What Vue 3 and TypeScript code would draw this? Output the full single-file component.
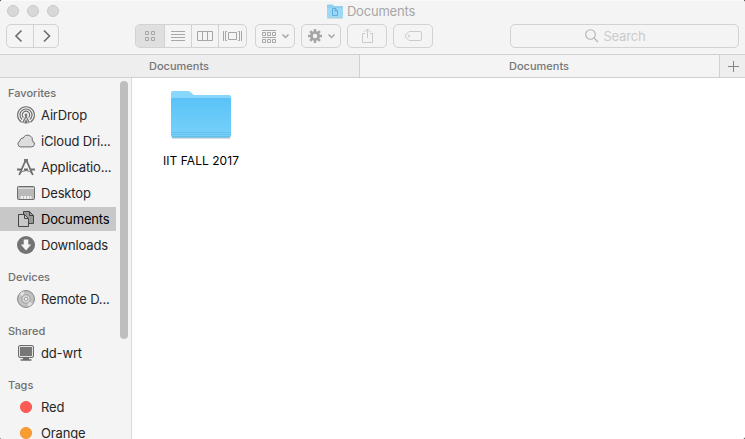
<script setup lang="ts">
interface Item { label: string; icon: string }
interface Section { title: string; items: Item[] }

const selected = 'Documents'
const sections: Section[] = [
  {
    title: 'Favorites',
    items: [
      { label: 'AirDrop', icon: 'airdrop' },
      { label: 'iCloud Dri...', icon: 'cloud' },
      { label: 'Applicatio...', icon: 'apps' },
      { label: 'Desktop', icon: 'desktop' },
      { label: 'Documents', icon: 'documents' },
      { label: 'Downloads', icon: 'downloads' },
    ],
  },
  { title: 'Devices', items: [{ label: 'Remote D...', icon: 'disc' }] },
  { title: 'Shared', items: [{ label: 'dd-wrt', icon: 'monitor' }] },
  { title: 'Tags', items: [{ label: 'Red', icon: 'red' }, { label: 'Orange', icon: 'orange' }] },
]
const teeth: number[] = [0, 45, 90, 135, 180, 225, 270, 315]
</script>

<template>
  <div class="window">
    <header class="toolbar">
      <div class="titlebar">
        <div class="lights"><i></i><i></i><i></i></div>
        <div class="title">
          <svg width="16" height="15" viewBox="0 0 16 15">
            <path d="M0 1.5Q0 .5 1 .5H5.5L7 2H15Q16 2 16 3V13.5H0Z" fill="#8fd0ee" />
            <path d="M0 4H16V13Q16 14 15 14H1Q0 14 0 13Z" fill="#9bd9f6" />
            <path d="M.5 14H15.5" stroke="#a9c6d3" />
            <path d="M5.5 4.5H8.5L10.5 6.7V11.5H5.5ZM8.3 4.5V7H10.5" fill="none" stroke="#5cade0" />
          </svg>
          <span>Documents</span>
        </div>
      </div>
      <div class="controls">
        <div class="group nav">
          <button aria-label="Back"><svg width="26" height="22" viewBox="0 0 26 22"><path d="M14.5 5.5L9 11L14.5 16.5" fill="none" stroke="#6c6c6c" stroke-width="1.6" /></svg></button>
          <button aria-label="Forward"><svg width="26" height="22" viewBox="0 0 26 22"><path d="M10 5.5L15.5 11L10 16.5" fill="none" stroke="#6c6c6c" stroke-width="1.6" /></svg></button>
        </div>
        <div class="group views">
          <button class="on" aria-label="Icons"><svg width="28" height="22" viewBox="0 0 28 22" fill="none" stroke="#a6a6a6"><path d="M9.5 6.5h3v3h-3zM15.5 6.5h3v3h-3zM9.5 12.5h3v3h-3zM15.5 12.5h3v3h-3z" /></svg></button>
          <button aria-label="List"><svg width="26" height="22" viewBox="0 0 26 22" stroke="#a6a6a6"><path d="M6 6.5h14M6 9.5h14M6 12.5h14M6 15.5h14" /></svg></button>
          <button aria-label="Columns"><svg width="26" height="22" viewBox="0 0 26 22" fill="none" stroke="#a6a6a6"><path d="M5.5 6.5h15v9h-15zM10.5 6.5v9M15.5 6.5v9" /></svg></button>
          <button aria-label="Cover Flow"><svg width="27" height="22" viewBox="0 0 27 22" fill="none" stroke="#a6a6a6"><path d="M9.5 7.5h8v7h-8zM4.5 6v10M22.5 6v10M8 6.5h-1.5v9H8M19 6.5h1.5v9H19" /></svg></button>
        </div>
        <div class="group single arrange">
          <button aria-label="Arrange"><svg width="38" height="22" viewBox="0 0 38 22" fill="none" stroke="#a6a6a6"><path d="M6 5.5h14M6 12.5h14M6.5 7.5h3v3h-3zM11.5 7.5h3v3h-3zM16.5 7.5h3v3h-3zM6.5 14.5h3v3h-3zM11.5 14.5h3v3h-3zM16.5 14.5h3v3h-3z" /><path d="M26.5 9.5l3 3l3-3" stroke-width="1.5" /></svg></button>
        </div>
        <div class="group single">
          <button aria-label="Action">
            <svg width="38" height="22" viewBox="0 0 38 22" fill="none" stroke="#a6a6a6">
              <g transform="translate(13 11)"><circle r="3.6" stroke-width="2.8" /><path v-for="a in teeth" :key="a" d="M0-4V-7" stroke-width="2.4" :transform="`rotate(${a})`" /></g>
              <path d="M26.5 9.5l3 3l3-3" stroke-width="1.5" />
            </svg>
          </button>
        </div>
        <div class="group single">
          <button aria-label="Share"><svg width="38" height="22" viewBox="0 0 38 22" fill="none" stroke="#cbcbcb"><path d="M17 8.5h-2.5v9h10v-9H22M19.5 13V4M16.5 7l3-3l3 3" /></svg></button>
        </div>
        <div class="group single">
          <button aria-label="Tags"><svg width="38" height="22" viewBox="0 0 38 22" fill="none" stroke="#cbcbcb"><path d="M15 6.5H26Q27.5 6.5 27.5 8V14Q27.5 15.5 26 15.5H15L11.5 12V10Z" /><circle cx="15" cy="11" r=".8" /></svg></button>
        </div>
        <div class="search">
          <svg width="14" height="14" viewBox="0 0 14 14" fill="none" stroke="#b4b4b4" stroke-width="1.1"><circle cx="5.5" cy="5.5" r="4.8" /><path d="M9 9l4 4" /></svg>
          <span>Search</span>
        </div>
      </div>
    </header>
    <nav class="tabs">
      <div class="tab back">Documents</div>
      <div class="tab">Documents</div>
      <div class="add"><svg width="11" height="11" viewBox="0 0 11 11"><path d="M5.5 0V11M0 5.5H11" stroke="#858585" /></svg></div>
    </nav>
    <main class="body">
      <aside class="sidebar">
        <div class="lists">
          <section v-for="s in sections" :key="s.title">
            <h2>{{ s.title }}</h2>
            <div class="rows">
              <div v-for="it in s.items" :key="it.label" class="row" :class="{ selected: it.label === selected }">
                <svg width="18" height="18" viewBox="0 0 18 18" fill="none" stroke="#6d6d6d">
                  <g v-if="it.icon === 'airdrop'" stroke-width="1.15">
                    <path d="M4.6 16.3A8.4 8.4 0 1 1 13.4 16.3M5.2 13.6A6 6 0 1 1 12.8 13.6M6.5 11.6A3.7 3.7 0 1 1 11.5 11.6" />
                    <path d="M9 7.5A1.5 1.5 0 0 1 9.7 10.3L13 16.5Q9 18.6 5 16.5L8.3 10.3A1.5 1.5 0 0 1 9 7.5Z" fill="#777" stroke="none" />
                    <path d="M6.8 17L9 12.2L11.2 17" stroke="#f3f3f3" stroke-width=".7" />
                  </g>
                  <path v-else-if="it.icon === 'cloud'" d="M3.6 14.9H14.5A3 3 0 0 0 15.2 9A4.7 4.7 0 0 0 6.3 6.1A2.9 2.9 0 0 0 2.9 9.1A3 3 0 0 0 3.6 14.9Z" fill="#dedede" />
                  <g v-else-if="it.icon === 'apps'">
                    <path d="M2.2 17L8.3 3M15.8 17L9.7 3" stroke-width="1.8" />
                    <path d="M0 11.5H4M7 11.5H11M14 11.5H18" stroke-width="2.2" />
                    <path d="M2 16Q9 9 16 16" stroke-width="1" />
                    <path d="M7 1H11V4.5H7Z" fill="#777" stroke="none" />
                  </g>
                  <g v-else-if="it.icon === 'desktop'">
                    <rect x=".5" y="2.5" width="17" height="13" rx="1" fill="#b9b9b9" />
                    <path d="M1 4.5H17" stroke="#dedede" />
                    <path d="M4 15V12.5H14V15" fill="#eee" stroke="#eee" />
                    <path d="M6.5 12V15M9.5 12V15M12.5 12V15" stroke="#b0b0b0" stroke-width=".7" />
                  </g>
                  <g v-else-if="it.icon === 'documents'" stroke="#454545">
                    <path d="M6.5 1.5H12.5L16.5 5.5V13.5H6.5Z" fill="#999" />
                    <path d="M12.5 1.5V5.5H16.5" />
                    <path d="M1.5 4.5H7.5L11.5 8.5V16.5H1.5Z" fill="#c8c8c8" />
                    <path d="M7.5 4.5V8.5H11.5" />
                  </g>
                  <g v-else-if="it.icon === 'downloads'" stroke="none">
                    <circle cx="9" cy="9" r="9" fill="#737373" />
                    <path d="M6.7 3.5H11.3V8.5H14.2L9 14.4L3.8 8.5H6.7Z" fill="#f5f5f5" />
                  </g>
                  <g v-else-if="it.icon === 'disc'">
                    <circle cx="9" cy="9" r="8.4" fill="#c2c2c2" stroke="#818181" />
                    <path d="M9 9L2.5 4.2Q4 2 6.5 1.3ZM9 9L15.5 13.8Q14 16 11.5 16.7Z" fill="#dedede" stroke="none" />
                    <circle cx="9" cy="9" r="4.2" fill="#ddd" stroke="#8b8b8b" stroke-width=".8" />
                    <circle cx="9" cy="9" r="1.8" fill="#eee" stroke="#8b8b8b" stroke-width=".8" />
                  </g>
                  <g v-else-if="it.icon === 'monitor'">
                    <rect x="1.5" y="1.5" width="15" height="12" rx="1.5" fill="#e0e0e0" />
                    <rect x="3" y="3" width="12" height="9" fill="#777" stroke="none" />
                    <path d="M6 14.5H12M3.5 16H14.5" stroke-width="1.3" />
                  </g>
                  <circle v-else-if="it.icon === 'red'" cx="9" cy="9" r="5.6" fill="#ff5b55" stroke="#f64a46" stroke-width=".8" />
                  <circle v-else cx="9" cy="9" r="5.6" fill="#f99d33" stroke="#ee8d22" stroke-width=".8" />
                </svg>
                <span>{{ it.label }}</span>
              </div>
            </div>
          </section>
        </div>
        <div class="scroll"></div>
      </aside>
      <div class="content">
        <div class="file">
          <svg width="64" height="52" viewBox="0 0 64 52">
            <defs><linearGradient id="folder" x1="0" y1="0" x2="0" y2="1"><stop offset="0" stop-color="#5ac3f8" /><stop offset="1" stop-color="#78d1fa" /></linearGradient></defs>
            <path d="M3 49H61" stroke="#cbd5da" stroke-width="1.5" />
            <path d="M2 4Q2 2 4 2H19Q20.5 2 21.5 3L23.5 5Q24.5 6 26 6H60Q62 6 62 8V20H2Z" fill="#88d6fb" />
            <path d="M2 11Q2 9.5 3.5 9.5H60.5Q62 9.5 62 11V46.5Q62 48.5 60 48.5H4Q2 48.5 2 46.5Z" fill="url(#folder)" />
            <path d="M2 10.5Q2 9.5 3.5 9.5H60.5Q62 9.5 62 10.5" fill="none" stroke="#54b8eb" stroke-width=".7" />
            <path d="M2 43.5H62M2 45.5H62" stroke="#5fbde9" stroke-width=".8" />
            <path d="M3 48H61" stroke="#58afd9" />
          </svg>
          <span>IIT FALL 2017</span>
        </div>
      </div>
    </main>
  </div>
</template>

<style>
body { margin: 0; overflow: hidden; background: #2b2b2b; }
</style>
<style scoped>
* { box-sizing: border-box; }
.window { width: 745px; height: 439px; overflow: hidden; display: flex; flex-direction: column; background: #fff; border-radius: 3px 3px 2px 2px; font-family: Inter, "Liberation Sans", sans-serif; font-size: 13px; color: #262626; }
.toolbar { height: 55px; flex: none; background: #f4f4f4; border-bottom: 1px solid #d0d0d0; box-shadow: inset 0 1px #fafafa; }
.titlebar { height: 24px; display: grid; grid-template-columns: 1fr auto 1fr; align-items: center; padding: 0 10px 2px 7px; }
.lights { display: flex; gap: 8px; }
.lights i { width: 12px; height: 12px; border-radius: 50%; background: #d8d8d8; border: 1px solid #c8c8c8; }
.title { display: flex; align-items: center; gap: 4px; color: #a7a7a7; letter-spacing: -.2px; }
.title svg { margin-top: 1px; }
.controls { display: flex; padding-left: 6px; height: 24px; }
.group { display: flex; border: 1px solid #d2d2d2; border-radius: 5px; overflow: hidden; height: 24px; flex: none; }
.group button { border: 0; padding: 0; margin: 0; background: transparent; display: flex; flex: 1; align-items: center; justify-content: center; border-left: 1px solid #d2d2d2; }
.group button:first-child { border-left: 0; }
.group button.on { background: #dfdfdf; flex: 0 0 28px; }
.group svg { flex: none; }
.nav { width: 53px; margin-right: 76px; }
.views { width: 112px; margin-right: 8px; }
.single { width: 40px; margin-right: 6px; }
.search { width: 229px; margin-left: 71px; border: 1px solid #d2d2d2; border-radius: 5px; display: flex; align-items: center; justify-content: center; gap: 4px; color: #cbcbcb; padding-right: 18px; letter-spacing: -.15px; }
.tabs { height: 23px; flex: none; display: flex; background: #f4f4f4; border-bottom: 1px solid #d0d0d0; }
.tab { width: 360px; border-right: 1px solid #d0d0d0; text-align: center; font-size: 11px; font-weight: 500; line-height: 22px; color: #777; padding-right: 1px; }
.back, .add { background: #eee; }
.add { flex: 1; display: flex; align-items: center; justify-content: center; padding-left: 2px; }
.body { flex: 1; min-height: 0; display: flex; }
.sidebar { width: 132px; flex: none; border-right: 1px solid #dadada; background: #f4f4f4; display: flex; overflow: hidden; }
.lists { width: 116px; padding-top: 6px; display: flex; flex-direction: column; gap: 11px; }
h2 { margin: 0 0 1px; padding-left: 8px; height: 18px; line-height: 18px; font-size: 11px; font-weight: 500; color: #707070; }
.rows { display: flex; flex-direction: column; gap: 2px; }
.row { height: 24px; padding-left: 17px; display: flex; align-items: center; gap: 6px; white-space: nowrap; letter-spacing: -.16px; }
.row svg { flex: none; }
.selected { background: #c8c8c8; color: #000; }
.scroll { width: 8px; height: 258px; margin: 3px 0 0 4px; border-radius: 4px; background: #bebebe; }
.content { flex: 1; padding: 11px 0 0 22px; }
.file { width: 94px; display: flex; flex-direction: column; align-items: center; color: #000; font-size: 12px; white-space: nowrap; }
.file span { margin-top: 12px; line-height: 16px; letter-spacing: .05px; }
</style>
